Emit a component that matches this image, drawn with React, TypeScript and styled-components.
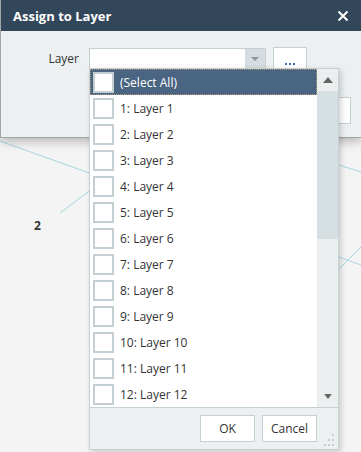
import React from "react";
import styled, { createGlobalStyle } from "styled-components";

const Global = createGlobalStyle`
  html, body { margin: 0; padding: 0; }
  body { font-family: "Open Sans", "Noto Sans", sans-serif; background: #f4f4f4; }
`;

const Page = styled.div`
  position: relative;
  width: 361px;
  height: 452px;
  overflow: hidden;
  background: #f4f4f4;
`;

const Canvas = styled.svg`
  position: absolute;
  left: 0;
  top: 0;
`;

const NodeLabel = styled.div`
  position: absolute;
  left: 34px;
  top: 217px;
  font-size: 12px;
  font-weight: 700;
  color: #333;
`;

const Dialog = styled.div`
  position: relative;
  width: 361px;
  height: 138px;
  box-sizing: border-box;
  border-left: 1px solid #9ea7aa;
  border-bottom: 1px solid #9ea7aa;
  background: #ecf0f1;
  box-shadow: 0 3px 10px rgba(0, 0, 0, 0.28);
  display: flex;
  flex-direction: column;
`;

const TitleBar = styled.div`
  height: 31px;
  background: #33475b;
  display: flex;
  align-items: center;
  justify-content: space-between;
  padding: 0 12px 0 12px;
  color: #fff;
`;

const Title = styled.span`
  font-size: 13px;
  font-weight: 700;
`;

const CloseIcon = styled.svg`
  display: block;
`;

const Body = styled.div`
  display: flex;
  flex-direction: column;
  gap: 27px;
  padding: 16px 0 0 0;
`;

const FieldRow = styled.div`
  display: flex;
  align-items: center;
`;

const Label = styled.div`
  width: 88px;
  text-align: right;
  padding-right: 10px;
  box-sizing: border-box;
  font-size: 12px;
  color: #333;
`;

const Combo = styled.div`
  width: 177px;
  height: 22px;
  box-sizing: border-box;
  border: 1px solid #c5d0d3;
  background: #fff;
  display: flex;
  justify-content: flex-end;
`;

const ComboButton = styled.div`
  width: 20px;
  background: #d5dde0;
  display: flex;
  align-items: center;
  justify-content: center;
`;

const DotsButton = styled.div`
  margin-left: 7px;
  width: 34px;
  height: 23px;
  box-sizing: border-box;
  border: 1px solid #c5d0d3;
  background: #fff;
  display: flex;
  align-items: flex-end;
  justify-content: center;
  padding-bottom: 4px;
  gap: 2px;
`;

const Dot = styled.span`
  width: 2px;
  height: 2px;
  background: #3c6fa8;
`;

const WideInput = styled.div`
  margin-left: 88px;
  width: 262px;
  height: 27px;
  box-sizing: border-box;
  border: 1px solid #c5d0d3;
  background: #fff;
`;

const Popup = styled.div`
  position: absolute;
  left: 89px;
  top: 68px;
  width: 250px;
  height: 382px;
  box-sizing: border-box;
  border: 1px solid #c5d0d3;
  background: #fff;
  box-shadow: 2px 2px 6px rgba(0, 0, 0, 0.18);
  display: flex;
  flex-direction: column;
`;

const ListArea = styled.div`
  display: flex;
  height: 338px;
`;

const List = styled.div`
  flex: 1;
  display: flex;
  flex-direction: column;
`;

const Row = styled.div<{ $active?: boolean }>`
  height: 26px;
  box-sizing: border-box;
  display: flex;
  align-items: center;
  padding-left: 2px;
  gap: 6px;
  font-size: 12px;
  color: ${(p) => (p.$active ? "#fff" : "#333")};
  background: ${(p) => (p.$active ? "#4a6582" : "#fff")};
  border: 1px dotted ${(p) => (p.$active ? "#b89a7a" : "transparent")};
`;

const Check = styled.div`
  width: 21px;
  height: 21px;
  box-sizing: border-box;
  border: 2px solid #c3cfd3;
  background: #fff;
  flex-shrink: 0;
`;

const ScrollBar = styled.div`
  width: 21px;
  background: #ebeff0;
  display: flex;
  flex-direction: column;
`;

const ScrollArrow = styled.div`
  height: 22px;
  display: flex;
  align-items: center;
  justify-content: center;
`;

const Thumb = styled.div`
  height: 148px;
  background: #d6dfe1;
`;

const Track = styled.div`
  flex: 1;
`;

const Footer = styled.div`
  position: relative;
  flex: 1;
  background: #ecf0f1;
  border-top: 1px solid #c5d0d3;
  display: flex;
  justify-content: flex-end;
  align-items: flex-start;
  padding: 7px 21px 0 0;
  gap: 7px;
`;

const Button = styled.button`
  width: 55px;
  height: 27px;
  box-sizing: border-box;
  border: 1px solid #c5d0d3;
  background: #fff;
  font-family: "Open Sans", "Noto Sans", sans-serif;
  font-size: 12px;
  color: #333;
  padding: 0;
`;

const Grip = styled.svg`
  position: absolute;
  right: 3px;
  bottom: 3px;
`;

const layers = Array.from({ length: 12 }, (_, i) => `${i + 1}: Layer ${i + 1}`);

export default function App() {
  return (
    <Page>
      <Global />
      <Canvas width="361" height="452" viewBox="0 0 361 452">
        <g stroke="#a9d5e2" strokeWidth="1" fill="none">
          <line x1="0" y1="141" x2="92" y2="174" />
          <line x1="60" y1="213" x2="92" y2="189" />
          <line x1="339" y1="165" x2="361" y2="172" />
          <line x1="339" y1="257" x2="361" y2="265" />
          <line x1="339" y1="269" x2="361" y2="247" />
        </g>
      </Canvas>
      <NodeLabel>2</NodeLabel>
      <Dialog>
        <TitleBar>
          <Title>Assign to Layer</Title>
          <CloseIcon width="12" height="12" viewBox="0 0 12 12">
            <path d="M1.5 1.5 L10.5 10.5 M10.5 1.5 L1.5 10.5" stroke="#fff" strokeWidth="2" />
          </CloseIcon>
        </TitleBar>
        <Body>
          <FieldRow>
            <Label>Layer</Label>
            <Combo>
              <ComboButton>
                <svg width="8" height="4" viewBox="0 0 8 4">
                  <path d="M0 0 H8 L4 4 Z" fill="#8a9699" />
                </svg>
              </ComboButton>
            </Combo>
            <DotsButton>
              <Dot />
              <Dot />
              <Dot />
            </DotsButton>
          </FieldRow>
          <FieldRow>
            <WideInput />
          </FieldRow>
        </Body>
      </Dialog>
      <Popup>
        <ListArea>
          <List>
            <Row $active>
              <Check />
              (Select All)
            </Row>
            {layers.map((l) => (
              <Row key={l}>
                <Check />
                {l}
              </Row>
            ))}
          </List>
          <ScrollBar>
            <ScrollArrow>
              <svg width="10" height="6" viewBox="0 0 10 6">
                <path d="M0 6 H10 L5 0 Z" fill="#666" />
              </svg>
            </ScrollArrow>
            <Thumb />
            <Track />
            <ScrollArrow>
              <svg width="8" height="5" viewBox="0 0 8 5">
                <path d="M0 0 H8 L4 5 Z" fill="#666" />
              </svg>
            </ScrollArrow>
          </ScrollBar>
        </ListArea>
        <Footer>
          <Button>OK</Button>
          <Button>Cancel</Button>
          <Grip width="12" height="12" viewBox="0 0 12 12">
            <g fill="#c2cdd1">
              <rect x="9" y="0" width="2" height="2" />
              <rect x="5" y="5" width="2" height="2" />
              <rect x="9" y="5" width="2" height="2" />
              <rect x="1" y="10" width="2" height="2" />
              <rect x="5" y="10" width="2" height="2" />
              <rect x="9" y="10" width="2" height="2" />
            </g>
          </Grip>
        </Footer>
      </Popup>
    </Page>
  );
}
